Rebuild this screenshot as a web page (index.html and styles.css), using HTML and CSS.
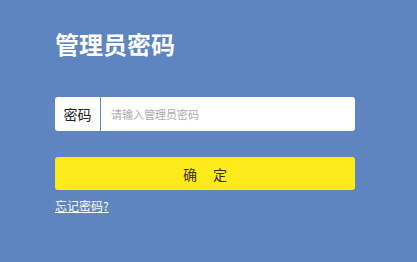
FILE: index.html
```html
<!DOCTYPE html>
<html lang="zh-CN">
<head>
<meta charset="utf-8">
<title>管理员密码</title>
<link rel="stylesheet" href="styles.css">
</head>
<body>
<main class="panel">
  <h1 class="title">管理员密码</h1>
  <div class="field">
    <label class="field-label" for="pwd">密码</label>
    <input class="field-input" id="pwd" type="password" placeholder="请输入管理员密码">
  </div>
  <button class="submit" type="button"><span>确</span><span>定</span></button>
  <a class="forgot" href="#">忘记密码?</a>
</main>
</body>
</html>
```
FILE: styles.css
```css
html, body {
  margin: 0;
  padding: 0;
}
body {
  background: #5e85c0;
  font-family: "Noto Sans CJK SC", "Noto Sans", sans-serif;
  width: 417px;
  height: 262px;
  overflow: hidden;
}
.panel {
  display: flex;
  flex-direction: column;
  align-items: flex-start;
  padding: 28px 62px 0 55px;
}
.title {
  margin: 0;
  color: #fff;
  font-size: 24px;
  font-weight: bold;
  line-height: 32px;
}
.field {
  margin-top: 37px;
  display: flex;
  width: 300px;
  height: 34px;
  gap: 1px;
}
.field-label {
  width: 45px;
  background: #fff;
  border-radius: 3px 0 0 3px;
  display: flex;
  align-items: center;
  justify-content: center;
  font-size: 14px;
  color: #222;
}
.field-input {
  flex: 1;
  min-width: 0;
  border: 0;
  outline: 0;
  margin: 0;
  padding: 0 10px;
  background: #fff;
  border-radius: 0 3px 3px 0;
  font-family: inherit;
  font-size: 11px;
  color: #333;
}
.field-input::placeholder {
  color: #aaa;
}
.submit {
  margin-top: 26px;
  width: 300px;
  height: 33px;
  border: 0;
  border-radius: 3px;
  background: #fcea1a;
  display: flex;
  align-items: center;
  justify-content: center;
  gap: 16px;
  font-family: inherit;
  font-size: 14px;
  color: #333;
  padding: 0;
}
.forgot {
  margin-top: 8px;
  color: #fff;
  font-size: 12px;
  line-height: 16px;
  text-decoration: underline;
}
```
